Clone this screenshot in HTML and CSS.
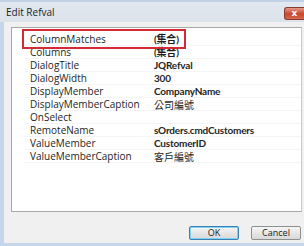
FILE: index.html
```html
<!DOCTYPE html>
<html lang="en">
<head>
<meta charset="UTF-8">
<title>Edit Refval</title>
<link rel="stylesheet" href="styles.css">
</head>
<body>
<div class="window">
  <!-- Title bar -->
  <div class="title-bar">
    <span class="title">Edit Refval</span>
    <span class="close-btn">x</span>
  </div>

  <!-- Client area -->
  <div class="client">
    <div class="grid">
      <div class="mark"></div>
      <div class="row"><span class="name">ColumnMatches</span><span class="value">(集合)</span></div>
      <div class="row"><span class="name">Columns</span><span class="value">(集合)</span></div>
      <div class="row"><span class="name">DialogTitle</span><span class="value">JQRefval</span></div>
      <div class="row"><span class="name">DialogWidth</span><span class="value">300</span></div>
      <div class="row"><span class="name">DisplayMember</span><span class="value">CompanyName</span></div>
      <div class="row"><span class="name">DisplayMemberCaption</span><span class="value plain">公司編號</span></div>
      <div class="row"><span class="name">OnSelect</span><span class="value"></span></div>
      <div class="row"><span class="name">RemoteName</span><span class="value">sOrders.cmdCustomers</span></div>
      <div class="row"><span class="name">ValueMember</span><span class="value">CustomerID</span></div>
      <div class="row"><span class="name">ValueMemberCaption</span><span class="value plain">客戶編號</span></div>
    </div>

    <div class="buttons">
      <button class="btn default">OK</button>
      <button class="btn">Cancel</button>
    </div>
  </div>
</div>
</body>
</html>
```

FILE: styles.css
```css
body {
    margin: 0;
    padding: 0;
    width: 304px;
    height: 246px;
    overflow: hidden;
    font-family: 'Open Sans', 'Noto Sans CJK TC', sans-serif;
    font-size: 10px;
    color: #1e1e1e;
}

.window {
    width: 304px;
    height: 246px;
    display: flex;
    flex-direction: column;
    background-color: #c6d6ea;
    border-top: 2px solid #c2d2e6;
    box-sizing: border-box;
}

/* Title bar */
.title-bar {
    height: 20px;
    display: flex;
    align-items: center;
    justify-content: space-between;
    padding-left: 6px;
    background: linear-gradient(#e2e8ef, #dbe2ea);
}

.title {
    font-size: 10px;
    color: #222;
}

.close-btn {
    width: 19px;
    height: 11px;
    margin-top: 2px;
    border: 1px solid #8a3b31;
    border-right: none;
    border-radius: 3px 0 0 3px;
    background: linear-gradient(#e49a8a, #c7452f 55%, #d8684f);
    color: #fff;
    font-family: 'DejaVu Sans', sans-serif;
    font-size: 9px;
    font-weight: bold;
    line-height: 10px;
    text-align: center;
}

/* Client area */
.client {
    flex: 1;
    margin-left: 4px;
    margin-bottom: 3px;
    padding: 5px 2px 0 7px;
    background-color: #f0f0f0;
    display: flex;
    flex-direction: column;
}

.grid {
    position: relative;
    height: 178px;
    padding-top: 5px;
    background-color: #fff;
    border: 1px solid #a8a8a8;
    border-right-color: #c8c8c8;
}

.row {
    display: flex;
    height: 13px;
    line-height: 13px;
    margin-left: 13px;
    border-bottom: 1px solid #f4f4f4;
    box-sizing: border-box;
}

.name {
    width: 124px;
    padding-left: 5px;
}

.value {
    font-family: 'Lato', 'Noto Sans CJK TC', sans-serif;
    font-size: 10px;
    font-weight: bold;
    letter-spacing: -0.2px;
}

.value.plain {
    font-family: 'Noto Sans CJK TC', sans-serif;
    font-size: 10px;
    font-weight: normal;
    letter-spacing: 0;
}

/* red annotation box */
.mark {
    position: absolute;
    left: 10px;
    top: 1px;
    width: 160px;
    height: 16px;
    border: 2px solid #d42a33;
}

.buttons {
    display: flex;
    justify-content: flex-end;
    gap: 12px;
    margin-top: 14px;
    padding-right: 1px;
}

.btn {
    width: 50px;
    height: 14px;
    padding: 0;
    border: 1px solid #8e8f8f;
    border-radius: 2px;
    background: linear-gradient(#f6f6f6, #e6e6e6 50%, #d9d9d9);
    font-family: 'Open Sans', sans-serif;
    font-size: 9px;
    line-height: 12px;
    color: #222;
}

.btn.default {
    border-color: #3c7fb1;
    box-shadow: inset 0 0 0 1px #7fd3f7;
}
```
